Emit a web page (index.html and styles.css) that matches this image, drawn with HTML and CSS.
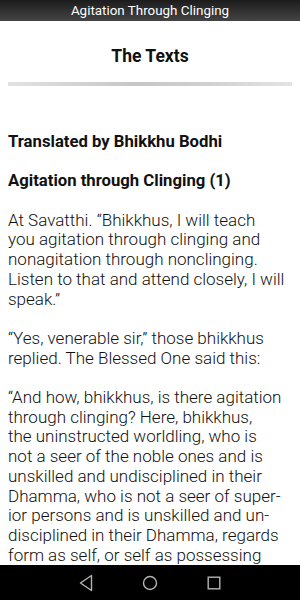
FILE: index.html
```html
<!DOCTYPE html>
<html>
<head>
<meta charset="utf-8">
<link rel="stylesheet" href="styles.css">
</head>
<body>
<div class="titlebar">Agitation Through Clinging</div>
<div class="content">
  <h1 class="page-title">The Texts</h1>
  <div class="divider"></div>
  <p class="head">Translated by Bhikkhu Bodhi</p>
  <p class="head">Agitation through Clinging (1)</p>
  <p class="body">At Savatthi. “Bhikkhus, I will teach<br>you agitation through clinging and<br>nonagitation through nonclinging.<br>Listen to that and attend closely, I will<br>speak.”</p>
  <p class="body">“Yes, venerable sir,” those bhikkhus<br>replied. The Blessed One said this:</p>
  <p class="body">“And how, bhikkhus, is there agitation<br>through clinging? Here, bhikkhus,<br>the uninstructed worldling, who is<br>not a seer of the noble ones and is<br>unskilled and undisciplined in their<br>Dhamma, who is not a seer of super-<br>ior persons and is unskilled and un-<br>disciplined in their Dhamma, regards<br>form as self, or self as possessing</p>
</div>
<div class="navbar">
  <div class="nav-slot"><svg width="14" height="18" viewBox="0 0 14 18"><path d="M12.5 1.5 L1.5 9 L12.5 16.5 Z" fill="none" stroke="#b4b4b4" stroke-width="1.4" stroke-linejoin="round"/></svg></div>
  <div class="nav-slot"><svg width="16" height="16" viewBox="0 0 16 16"><circle cx="8" cy="8" r="6.5" fill="none" stroke="#b4b4b4" stroke-width="1.4"/></svg></div>
  <div class="nav-slot"><svg width="14" height="14" viewBox="0 0 14 14"><rect x="1.2" y="1.2" width="11.6" height="11.6" fill="none" stroke="#b4b4b4" stroke-width="1.4"/></svg></div>
</div>
</body>
</html>
```
FILE: styles.css
```css
html, body {
  margin: 0;
  padding: 0;
  height: 100%;
  overflow: hidden;
  background: #fff;
}
body {
  font-family: Roboto, "Liberation Sans", sans-serif;
  color: #111;
  position: relative;
}
.titlebar {
  height: 21px;
  line-height: 22px;
  background: linear-gradient(#1c1c1c, #444);
  color: #fff;
  text-align: center;
  font-size: 13.4px;
}
.content {
  padding: 0 8px;
}
.page-title {
  margin: 0;
  padding-top: 25px;
  height: 20px;
  line-height: 20px;
  font-size: 17.5px;
  font-weight: 700;
  text-align: center;
}
.divider {
  margin-top: 16px;
  height: 4px;
  background: linear-gradient(to right, #e2e2e2, #c6c6c6 45%, #d0d0d0 70%, #e4e4e4);
}
.head {
  margin: 46px 0 0;
  font-size: 16.7px;
  font-weight: 700;
  line-height: 19.7px;
  white-space: nowrap;
}
.head + .head {
  margin-top: 19.7px;
}
.body {
  margin: 19.7px 0 0;
  font-size: 17px;
  font-weight: 300;
  line-height: 19.7px;
  white-space: nowrap;
}
.navbar {
  position: absolute;
  left: 0;
  right: 0;
  bottom: 0;
  height: 35px;
  background: #000;
  display: flex;
  justify-content: center;
  align-items: center;
}
.nav-slot {
  width: 64px;
  display: flex;
  justify-content: center;
}
.nav-slot svg {
  display: block;
}
```
